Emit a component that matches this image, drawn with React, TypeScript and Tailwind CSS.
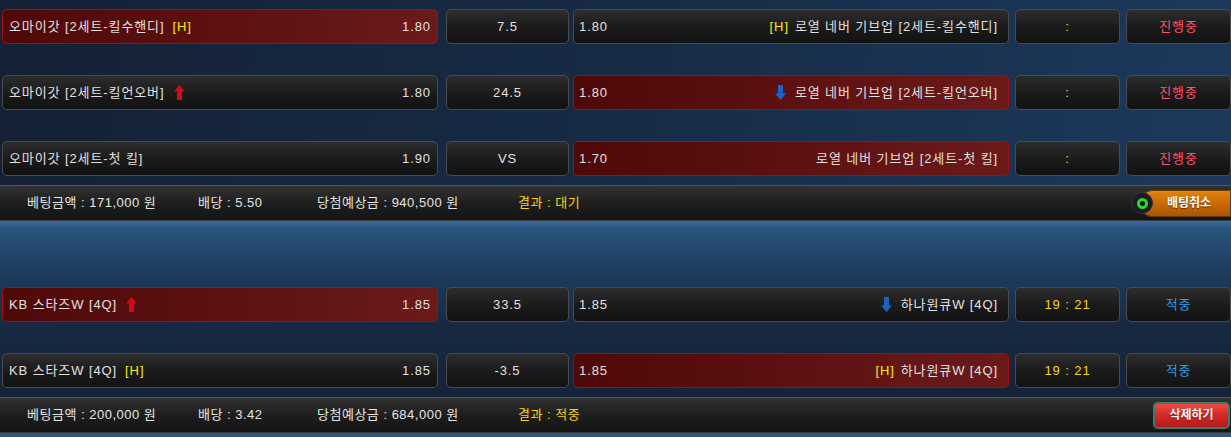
type Side = { name: string; tag?: boolean; arrow?: 'up' | 'down' }

type Row = {
  home: Side
  homeOdds: string
  homeSel?: boolean
  mid: string
  away: Side
  awayOdds: string
  awaySel?: boolean
  score: string
  status: string
  hit?: boolean
}

type Bet = {
  rows: Row[]
  amount: string
  odds: string
  win: string
  result: string
  action: 'cancel' | 'delete'
}

const BETS: Bet[] = [
  {
    rows: [
      {
        home: { name: '오마이갓 [2세트-킬수핸디]', tag: true },
        homeOdds: '1.80',
        homeSel: true,
        mid: '7.5',
        away: { name: '로열 네버 기브업 [2세트-킬수핸디]', tag: true },
        awayOdds: '1.80',
        score: ':',
        status: '진행중',
      },
      {
        home: { name: '오마이갓 [2세트-킬언오버]', arrow: 'up' },
        homeOdds: '1.80',
        mid: '24.5',
        away: { name: '로열 네버 기브업 [2세트-킬언오버]', arrow: 'down' },
        awayOdds: '1.80',
        awaySel: true,
        score: ':',
        status: '진행중',
      },
      {
        home: { name: '오마이갓 [2세트-첫 킬]' },
        homeOdds: '1.90',
        mid: 'VS',
        away: { name: '로열 네버 기브업 [2세트-첫 킬]' },
        awayOdds: '1.70',
        awaySel: true,
        score: ':',
        status: '진행중',
      },
    ],
    amount: '171,000',
    odds: '5.50',
    win: '940,500',
    result: '대기',
    action: 'cancel',
  },
  {
    rows: [
      {
        home: { name: 'KB 스타즈W [4Q]', arrow: 'up' },
        homeOdds: '1.85',
        homeSel: true,
        mid: '33.5',
        away: { name: '하나원큐W [4Q]', arrow: 'down' },
        awayOdds: '1.85',
        score: '19 : 21',
        status: '적중',
        hit: true,
      },
      {
        home: { name: 'KB 스타즈W [4Q]', tag: true },
        homeOdds: '1.85',
        mid: '-3.5',
        away: { name: '하나원큐W [4Q]', tag: true },
        awayOdds: '1.85',
        awaySel: true,
        score: '19 : 21',
        status: '적중',
        hit: true,
      },
    ],
    amount: '200,000',
    odds: '3.42',
    win: '684,000',
    result: '적중',
    action: 'delete',
  },
]

const dark =
  'rounded-[5px] border border-[#4b4b4b] bg-[linear-gradient(to_bottom,#2d2d2d,#1a1a1a_55%,#121212)]'
const red =
  'rounded-[5px] border border-[#a30f0f] bg-[linear-gradient(to_right,#4f0808,#6b1a1a)]'

const Arrow = ({ dir }: { dir: 'up' | 'down' }) =>
  dir === 'up' ? (
    <svg width="11" height="15" viewBox="0 0 11 15" className="shrink-0">
      <path d="M5.5 0 L11 6.5 H8 V15 H3 V6.5 H0 Z" fill="#d2091a" />
    </svg>
  ) : (
    <svg width="11" height="15" viewBox="0 0 11 15" className="shrink-0">
      <path d="M3 0 H8 V8.5 H11 L5.5 15 L0 8.5 H3 Z" fill="#1c63c8" />
    </svg>
  )

const BetRow = ({ row }: { row: Row }) => (
  <div className="flex h-[35px] pl-[2px] text-[13px] tracking-[0.9px] text-[#e0e0e0]">
    <div
      className={`flex w-[436px] items-center justify-between pl-[6px] pr-[6px] ${row.homeSel ? red : dark}`}
    >
      <div className="flex items-center">
        <span>{row.home.name}</span>
        {row.home.tag && <span className="ml-[8px] text-[#f6ec1c]">[H]</span>}
        {row.home.arrow && (
          <span className="ml-[9px] flex">
            <Arrow dir={row.home.arrow} />
          </span>
        )}
      </div>
      <span>{row.homeOdds}</span>
    </div>
    <div className={`ml-[8px] flex w-[123px] items-center justify-center ${dark}`}>{row.mid}</div>
    <div
      className={`ml-[4px] flex w-[436px] items-center justify-between pl-[5px] pr-[10px] ${row.awaySel ? red : dark}`}
    >
      <span>{row.awayOdds}</span>
      <div className="flex items-center">
        {row.away.arrow && (
          <span className="mr-[9px] flex">
            <Arrow dir={row.away.arrow} />
          </span>
        )}
        {row.away.tag && <span className="mr-[6px] text-[#f6ec1c]">[H]</span>}
        <span>{row.away.name}</span>
      </div>
    </div>
    <div className={`ml-[6px] flex w-[105px] items-center justify-center text-[#f7d416] ${dark}`}>
      {row.score}
    </div>
    <div
      className={`ml-[6px] flex w-[105px] items-center justify-center ${dark} ${row.hit ? 'text-[#2f9be6]' : 'text-[#ff5270]'}`}
    >
      {row.status}
    </div>
  </div>
)

const Summary = ({ bet }: { bet: Bet }) => (
  <div className="flex h-[36px] items-center border-y border-t-[#555] border-b-[#3a3a3a] bg-[linear-gradient(to_bottom,#323232,#1e1e1e_50%,#141414)] text-[13px] tracking-[0.5px] text-[#e4e4e4]">
    <span className="w-[198px] shrink-0 pl-[27px]">베팅금액 : {bet.amount} 원</span>
    <span className="w-[119px] shrink-0">배당 : {bet.odds}</span>
    <span className="w-[201px] shrink-0">당첨예상금 : {bet.win} 원</span>
    <span className="text-[#f7d416]">결과 : {bet.result}</span>
    <div className="ml-auto flex items-center tracking-normal">
      {bet.action === 'cancel' ? (
        <div className="flex items-center">
          <div className="z-10 flex h-[22px] w-[22px] items-center justify-center rounded-full border border-[#3b2f4a] bg-[#1c1c22]">
            <div className="h-[11px] w-[11px] rounded-full border-[3px] border-[#31d632] bg-[#0f1a0f]" />
          </div>
          <div className="-ml-[14px] flex h-[27px] w-[92px] items-center justify-center rounded-l-full rounded-r-[12px] border border-[#6a3a05] bg-[linear-gradient(to_bottom,#e3820f,#c86a06_50%,#a95503)] pl-[8px] text-[12px] font-bold text-white [text-shadow:0_1px_1px_#5a2c00]">
            배팅취소
          </div>
        </div>
      ) : (
        <div className="mr-[1px] flex h-[27px] w-[77px] items-center justify-center rounded-[5px] border-2 border-[#3f7a6c] bg-[linear-gradient(to_bottom,#ee4a46,#d12a26_50%,#b31a18)] text-[12px] font-bold text-white [text-shadow:0_1px_1px_#6a0a0a]">
          삭제하기
        </div>
      )}
    </div>
  </div>
)

export default function App() {
  return (
    <div
      className="h-[437px] w-[1231px] overflow-hidden bg-[linear-gradient(100deg,#142135,#172a44_45%,#1c3a5e)]"
      style={{ fontFamily: '"Liberation Sans", "Noto Sans CJK KR", sans-serif' }}
    >
      <div className="flex flex-col gap-[31px] py-[9px]">
        {BETS[0].rows.map((r, i) => (
          <BetRow key={i} row={r} />
        ))}
      </div>
      <Summary bet={BETS[0]} />
      <div className="flex flex-col gap-[31px] bg-[linear-gradient(to_bottom,#3a6c9c,#2a5580_4%,#1f3f63_25%,#172841_60%,#15233a)] pb-[9px] pt-[66px]">
        {BETS[1].rows.map((r, i) => (
          <BetRow key={i} row={r} />
        ))}
      </div>
      <Summary bet={BETS[1]} />
      <div className="h-[5px] bg-[#2a5a8a]" />
    </div>
  )
}
